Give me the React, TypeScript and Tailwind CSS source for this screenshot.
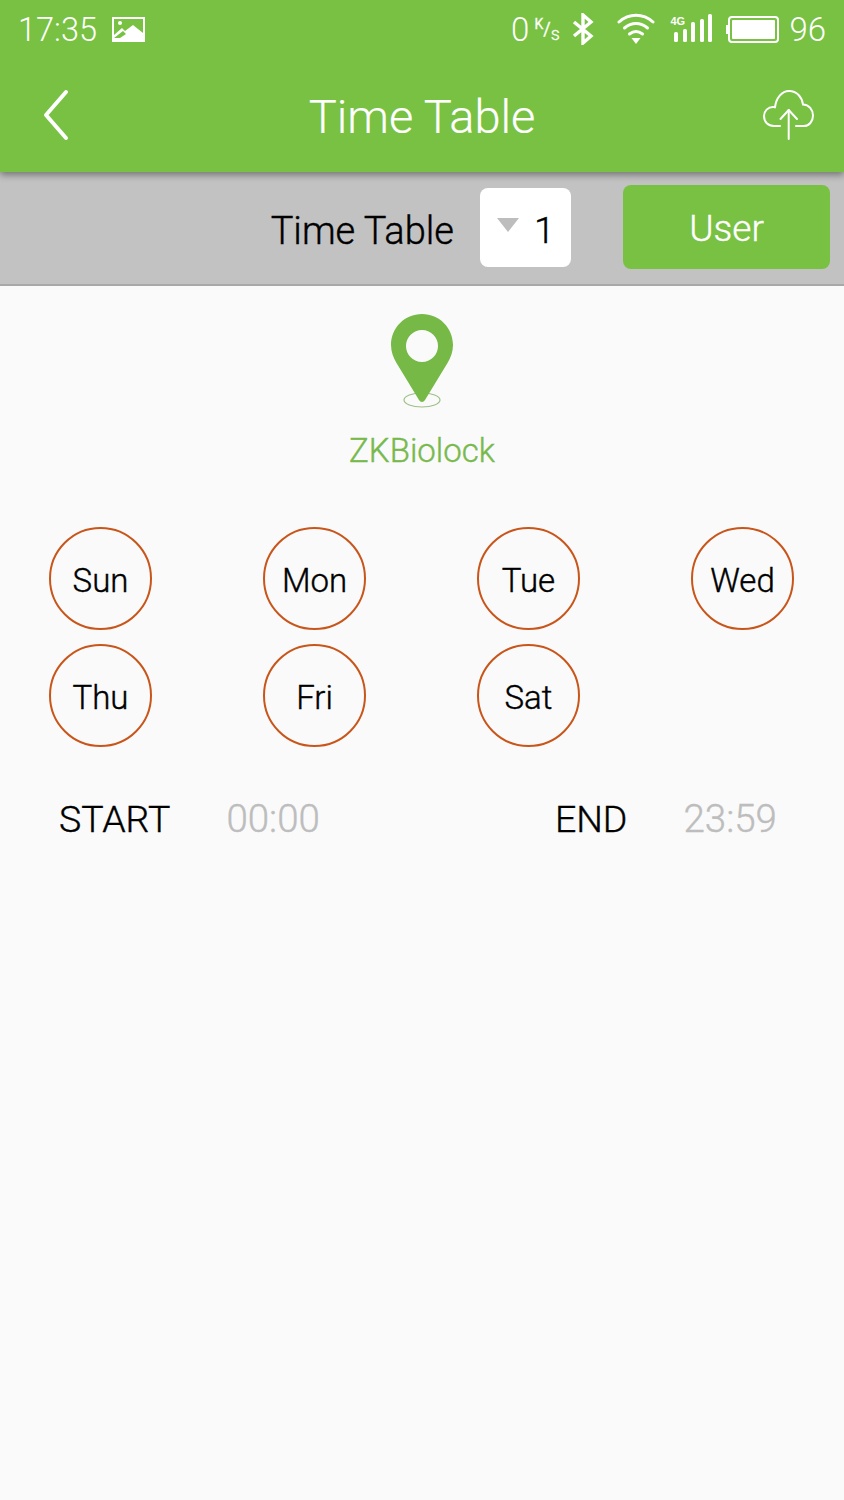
const DAYS = ["Sun", "Mon", "Tue", "Wed", "Thu", "Fri", "Sat"];
const SIGNAL_BARS = ["h-[10px]", "h-[13px]", "h-[20px]", "h-[23px]", "h-[28px]"];

function PictureIcon() {
  return (
    <svg width="33" height="25" viewBox="0 0 33 25">
      <path
        fill="#fff"
        fillRule="evenodd"
        d="M0 0h33v25H0z M2 2v16l8-7 3 3 8-6 10 8V2z M2 21l9-7 3 3-6 4z"
      />
      <circle cx="8" cy="6" r="2" fill="#fff" />
    </svg>
  );
}

function BluetoothIcon() {
  return (
    <svg width="22" height="32" viewBox="0 0 22 32" fill="none" stroke="#fff" strokeWidth="3.4">
      <path d="M2 9l17 14-8 7V2l8 7L2 23" />
    </svg>
  );
}

function WifiIcon() {
  return (
    <svg width="38" height="32" viewBox="0 0 38 32" fill="none" stroke="#fff" strokeWidth="3" strokeLinecap="round">
      <path d="M2 9c10-9 24-9 34 0" />
      <path d="M7.500 15c7-6 16-6 23 0" />
      <path d="M12.500 21c4-3 9-3 13 0" />
      <path d="M14.500 25h9l-4.500 6z" fill="#fff" stroke="none" />
    </svg>
  );
}

function SignalIcon() {
  return (
    <div className="relative h-[30px] w-[43px]">
      <span className="absolute left-0 top-[2px] font-['Liberation_Sans',sans-serif] text-[11px] font-bold leading-[11px] text-white">
        4G
      </span>
      <div className="absolute bottom-[2px] left-[4px] flex items-end gap-[4.500px]">
        {SIGNAL_BARS.map((height) => (
          <span key={height} className={`${height} w-[4px] rounded-[1.500px] bg-white`} />
        ))}
      </div>
    </div>
  );
}

function BatteryIcon() {
  return (
    <div className="flex items-center">
      <span className="h-[9px] w-[2px] bg-white" />
      <div className="flex h-[27px] w-[51px] rounded-[4px] border-2 border-white p-[2px]">
        <span className="flex-1 rounded-[1px] bg-white" />
      </div>
    </div>
  );
}

function UploadCloudIcon() {
  return (
    <svg width="54" height="52" viewBox="0 0 54 52" fill="none" stroke="#fff" strokeWidth="2" strokeLinecap="round" strokeLinejoin="round">
      <path d="M18 38h-6C6 38 2 34 2 28c0-5 4-9 9-9 1 0 2 0 2 .5C14 10 20 3 27 3c8 0 13 6 14 13.500 6 0 10 5.500 10 11 0 6-4 10.500-9 10.500h-8" />
      <path d="M26.700 51V22" />
      <path d="M18.500 31l8.200-9 8.300 9" />
    </svg>
  );
}

function PinIcon() {
  return (
    <svg width="66" height="96" viewBox="0 0 66 96" fill="none">
      <ellipse cx="32" cy="87" rx="18" ry="7" stroke="#9dbf85" strokeWidth="1.2" />
      <path
        fill="#76b947"
        fillRule="evenodd"
        d="M32 1C14.500 1 1 15 1 32c0 7 2.500 13 5.500 18L29 87c1.500 2.500 4.500 2.500 6 0l22.500-37c3-5 5.500-11 5.500-18C63 15 49.500 1 32 1z M32 17a16 16 0 1 1 0 32a16 16 0 0 1 0-32z"
      />
    </svg>
  );
}

export default function App() {
  return (
    <div className="flex h-[1500px] w-[844px] flex-col bg-[#fafafa] font-['Roboto',sans-serif]">
      {/* Green header */}
      <header className="relative z-10 h-[172px] bg-[#78c142] text-white shadow-[0_3px_7px_rgba(0,0,0,0.4)]">
        <div className="flex h-[58px] items-center justify-between pl-[18px] pr-[18px]">
          <div className="flex items-center gap-[15px]">
            <span className="mt-[2px] text-[32.500px] font-light leading-none">17:35</span>
            <PictureIcon />
          </div>
          <div className="flex items-center">
            <span className="mt-[1px] text-[33px] font-light leading-none">0</span>
            <span className="ml-[5px] mr-[14px] flex h-[23px] w-[24px] [-webkit-text-stroke:0.3px_currentColor]">
              <span className="self-start text-[14px] leading-[13px]">K</span>
              <span className="self-center text-[18px] leading-[18px]">/</span>
              <span className="self-end text-[18px] font-light leading-[14px]">s</span>
            </span>
            <BluetoothIcon />
            <span className="ml-[23px] mr-[15px] flex">
              <WifiIcon />
            </span>
            <SignalIcon />
            <span className="ml-[13px] mr-[10px] flex">
              <BatteryIcon />
            </span>
            <span className="text-[33px] font-light leading-none">96</span>
          </div>
        </div>
        <div className="relative flex h-[114px] items-center justify-center pt-[2px]">
          <svg className="absolute left-[43px] top-[31px]" width="26" height="52" viewBox="0 0 26 52" fill="none" stroke="#fff" strokeWidth="4" strokeLinecap="round" strokeLinejoin="round">
            <path d="M23 3L3 26l20 23" />
          </svg>
          <h1 className="text-[47px] font-light leading-none [-webkit-text-stroke:0.2px_currentColor]">Time Table</h1>
          <div className="absolute left-[762px] top-[30px] flex">
            <UploadCloudIcon />
          </div>
        </div>
      </header>

      {/* Selector bar */}
      <div className="flex h-[114px] items-center justify-end border-b-2 border-[#a8a8a8] bg-[#c2c2c2] pr-[14px]">
        <span className="mt-[6px] text-[38px] font-light leading-none text-black [-webkit-text-stroke:0.4px_currentColor]">Time Table</span>
        <div className="mb-[1px] ml-[26px] flex h-[79px] w-[91px] items-center rounded-[8px] bg-white pl-[17px]">
          <span className="mb-[5px] h-0 w-0 border-x-[11px] border-t-[14px] border-x-transparent border-t-[#bdbdbd]" />
          <span className="ml-[15px] mt-[7px] text-[37.500px] font-light leading-none text-black [-webkit-text-stroke:0.4px_currentColor]">1</span>
        </div>
        <button type="button" className="mb-[2px] ml-[52px] h-[84px] w-[207px] rounded-[8px] bg-[#78c142] pt-[2px] text-[37px] font-light leading-none text-white [-webkit-text-stroke:0.4px_currentColor]">
          User
        </button>
      </div>

      {/* Device */}
      <div className="flex flex-col items-center pt-[27px]">
        <span className="ml-[1px] flex">
          <PinIcon />
        </span>
        <span className="mt-[22px] text-[33px] font-light leading-[40px] text-[#78b94c] [-webkit-text-stroke:0.4px_currentColor]">ZKBiolock</span>
      </div>

      {/* Day circles */}
      <div className="mt-[56px] grid grid-cols-[repeat(4,103px)] gap-x-[111px] gap-y-[14px] pl-[49px]">
        {DAYS.map((day) => (
          <div
            key={day}
            className="flex h-[103px] w-[103px] items-center justify-center rounded-full border-[2.500px] border-[#c8561b] pt-[4px] text-[33px] font-light text-black [-webkit-text-stroke:0.4px_currentColor]"
          >
            {day}
          </div>
        ))}
      </div>

      {/* Start and end */}
      <div className="mt-[48px] flex items-baseline leading-[48px] [-webkit-text-stroke:0.4px_currentColor]">
        <span className="ml-[59px] text-[37.500px] font-light text-black">START</span>
        <span className="ml-[56px] text-[38.500px] font-light text-[#bdbdbd]">00:00</span>
        <span className="ml-[235px] text-[37.500px] font-light text-black">END</span>
        <span className="ml-[56px] text-[38.500px] font-light text-[#bdbdbd]">23:59</span>
      </div>
    </div>
  );
}
